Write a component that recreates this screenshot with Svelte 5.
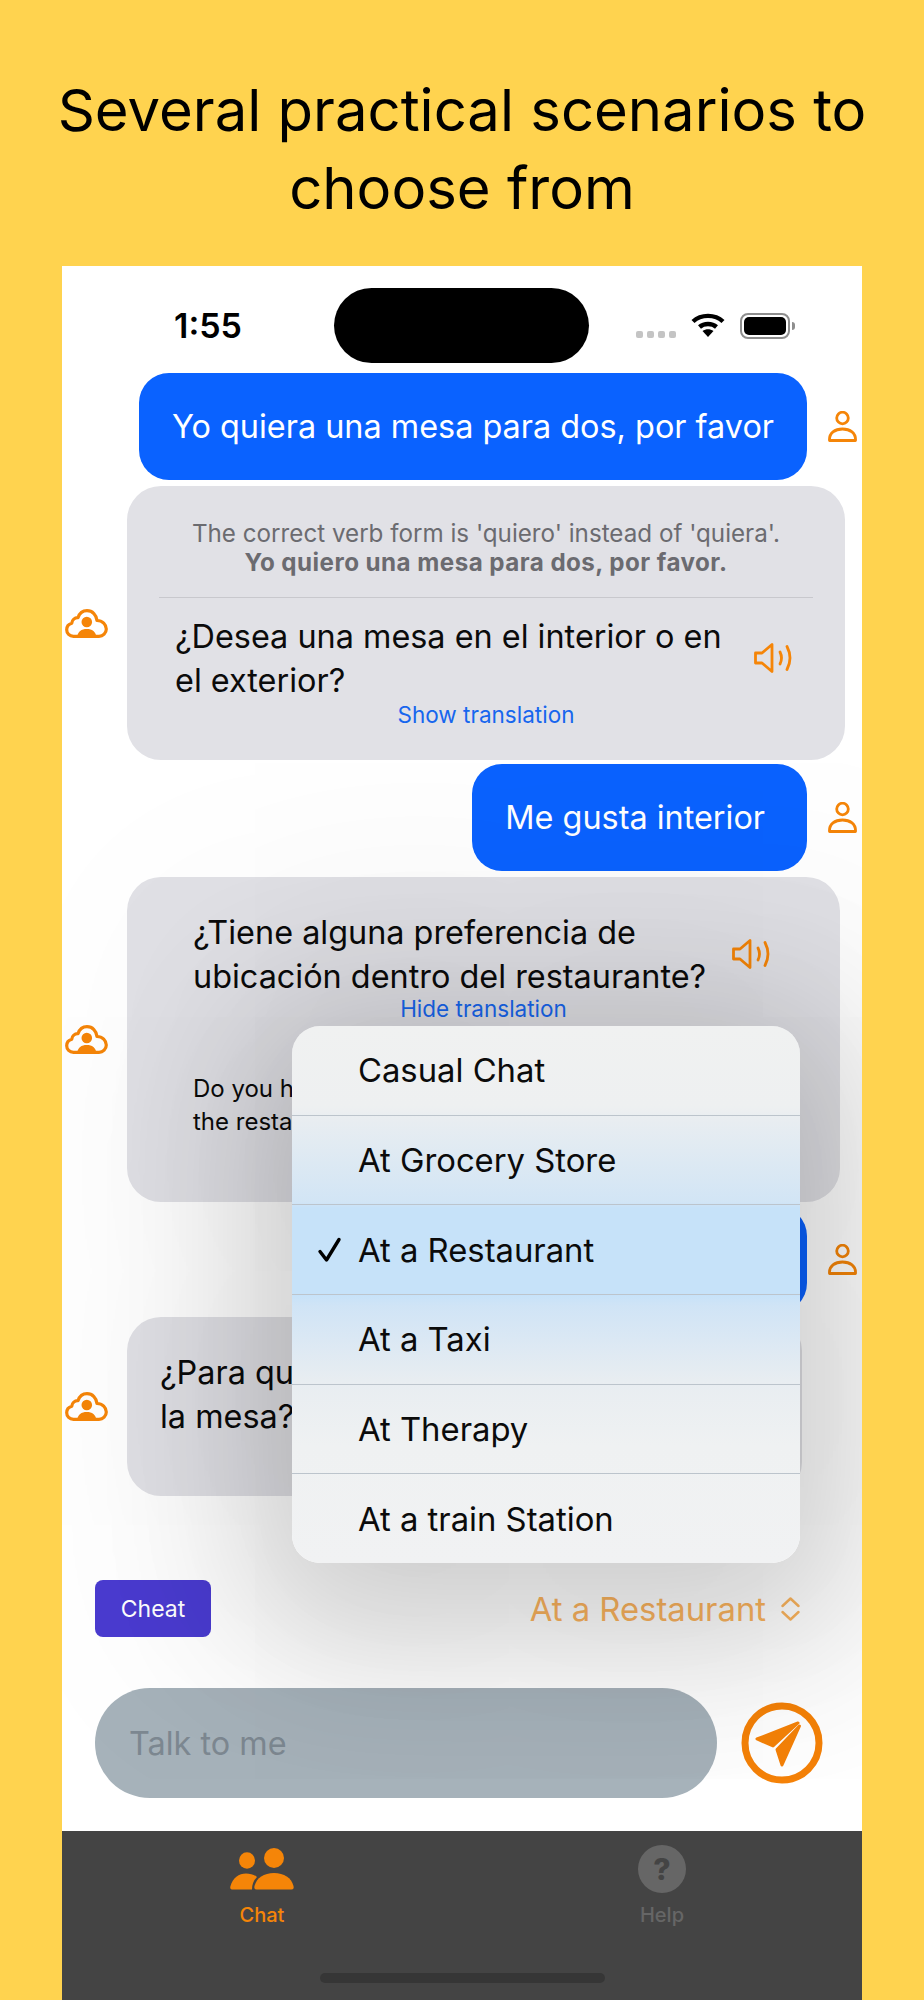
<script>
  // scenarios offered by the picker
  const scenarios = [
    { label: 'Casual Chat' },
    { label: 'At Grocery Store' },
    { label: 'At a Restaurant', selected: true },
    { label: 'At a Taxi' },
    { label: 'At Therapy' },
    { label: 'At a train Station' },
  ];
</script>

{#snippet userIcon()}
  <svg class="avatar-user" viewBox="0 0 29 31" width="29" height="31">
    <circle cx="14.5" cy="7" r="5.8" />
    <path d="M1.5 29.5 C1 22 7 18 14.5 18 C22 18 28 22 27.5 29.5 Z" />
  </svg>
{/snippet}

{#snippet botIcon()}
  <svg class="avatar-bot" viewBox="0 0 43 29" width="43" height="29">
    <path class="cloud" d="M8.5 27.3 C4.5 27.3 1.7 24.3 1.7 20.7 C1.7 17.5 3.8 15 6.8 14.2 C7 10.8 9.8 8.5 13 8.7 C14.5 4.3 18 1.7 22 1.7 C27.5 1.7 31.5 6 32 11.5 C37.5 11.5 41.3 15.5 41.3 20 C41.3 24 38 27.3 34 27.3 Z" />
    <circle class="fill" cx="21.8" cy="13" r="5.3" />
    <path class="fill" d="M12 28.5 C12.5 22.5 16.5 20 21.8 20 C27 20 31 22.5 31.5 28.5 Z" />
  </svg>
{/snippet}

{#snippet speaker()}
  <svg class="speaker" viewBox="0 0 38 30" width="38" height="30">
    <path d="M1.5 10 H8 L18 1.5 V28.5 L8 20 H1.5 Z" />
    <path d="M26 9 Q29 15 26 21" />
    <path d="M33 3.5 Q39 15 33 26.5" />
  </svg>
{/snippet}

<div class="page">
  <h1 class="headline">Several practical scenarios to<br />choose from</h1>

  <div class="phone">
    <div class="status">
      <span class="time">1:55</span>
      <div class="island"></div>
      <div class="signal">
        <i></i><i></i><i></i><i></i>
      </div>
      <svg class="wifi" viewBox="0 0 34 24" width="34" height="24">
        <path class="arc" d="M2 8.5 C10 1 24 1 32 8.5" />
        <path class="arc" d="M8.5 14 C13 10 21 10 25.5 14" />
        <path class="wedge" d="M11.5 18 C15 15.6 19 15.6 22.5 18 L17 24 Z" />
      </svg>
      <div class="battery"><div class="charge"></div></div>
      <div class="nub"></div>
    </div>

    <div class="thread">
      <div class="row user">
        <div class="bubble blue">Yo quiera una mesa para dos, por favor</div>
        {@render userIcon()}
      </div>

      <div class="row bot gap-wide">
        {@render botIcon()}
        <div class="bubble grey first">
          <p class="correction">
            The correct verb form is 'quiero' instead of 'quiera'.<br />
            <b>Yo quiero una mesa para dos, por favor.</b>
          </p>
          <div class="rule"></div>
          <div class="say">
            <p class="question">¿Desea una mesa en el interior o en el exterior?</p>
            {@render speaker()}
          </div>
          <div class="link">Show translation</div>
        </div>
      </div>

      <div class="row user">
        <div class="bubble blue short">Me gusta interior</div>
        {@render userIcon()}
      </div>

      <div class="row bot gap-wide">
        {@render botIcon()}
        <div class="bubble grey second">
          <div class="say">
            <p class="question">¿Tiene alguna preferencia de ubicación dentro del restaurante?</p>
            {@render speaker()}
          </div>
          <div class="link">Hide translation</div>
          <p class="translation">Do you have any preference for location<br />the restaurant?</p>
        </div>
      </div>

      <div class="row user">
        <div class="bubble blue">Adentro, cerca de la ventana</div>
        {@render userIcon()}
      </div>

      <div class="row bot">
        {@render botIcon()}
        <div class="bubble grey third">
          <p class="question">¿Para qué hora desea reservar<br />la mesa?</p>
        </div>
      </div>
    </div>

    <div class="controls">
      <button class="cheat">Cheat</button>
      <div class="picker">
        <span>At a Restaurant</span>
        <svg viewBox="0 0 21 24" width="21" height="24">
          <path d="M2.5 9 L10.5 1.5 L18.5 9" />
          <path d="M2.5 15 L10.5 22.5 L18.5 15" />
        </svg>
      </div>
    </div>

    <div class="composer">
      <input class="field" placeholder="Talk to me" />
      <svg class="send" viewBox="0 0 82 82" width="82" height="82">
        <circle class="ring" cx="41" cy="41" r="37" />
        <path class="plane" d="M57 21 L16 37 L32 44 Z" />
        <path class="plane" d="M58.5 24 L36 47.5 L41 63 Z" />
      </svg>
    </div>

    <nav class="tabs">
      <div class="tab-row">
        <div class="tab active">
          <svg viewBox="0 0 64 42" width="64" height="42">
            <ellipse cx="17" cy="12.5" rx="8" ry="8.3" />
            <circle cx="44" cy="10" r="10" />
            <path d="M2 41.5 C0 41.5 0 39.5 0.5 38 C2.5 30 9 25.5 16 25.5 C20 25.5 24 26.5 27 29 C24 32 22 36 22 41.5 Z" />
            <path d="M26.5 41.5 C24.5 41.5 24 40 24.5 38 C26.5 30 34 25 44 25 C54 25 61.5 30 63.5 38 C64 40 63.5 41.5 61.5 41.5 Z" />
          </svg>
          <span>Chat</span>
        </div>
        <div class="tab">
          <div class="help-mark">?</div>
          <span>Help</span>
        </div>
      </div>
      <div class="home-bar"></div>
    </nav>

    <div class="menu">
      {#each scenarios as item}
        <div class="menu-item">
          {#if item.selected}
            <svg class="tick" viewBox="0 0 25 26" width="25" height="26">
              <path d="M3 14.5 L9.5 23 L22 2.5" />
            </svg>
          {/if}
          {item.label}
        </div>
      {/each}
    </div>
  </div>
</div>

<style>
  :global(body) {
    margin: 0;
    background: #ffd34f;
  }

  .page {
    width: 924px;
    height: 2000px;
    overflow: hidden;
    background: #ffd34f;
    font-family: Inter, "Liberation Sans", sans-serif;
  }

  .headline {
    margin: 0;
    padding-top: 71px;
    height: 266px;
    box-sizing: border-box;
    font-size: 58px;
    font-weight: 400;
    line-height: 78px;
    text-align: center;
    color: #000;
  }

  .phone {
    position: relative;
    width: 800px;
    height: 1734px;
    margin-left: 62px;
    overflow: hidden;
    background: #fff;
    display: flex;
    flex-direction: column;
  }

  /* status bar */
  .status {
    height: 107px;
    box-sizing: border-box;
    padding: 22px 0 10px 112px;
    display: flex;
    align-items: center;
    flex-shrink: 0;
  }

  .time {
    width: 160px;
    font-size: 34px;
    font-weight: 600;
    color: #000;
  }

  .island {
    width: 255px;
    height: 75px;
    border-radius: 38px;
    background: #000;
  }

  .signal {
    display: flex;
    gap: 4px;
    margin-left: 47px;
    margin-top: 18px;
  }

  .signal i {
    width: 7px;
    height: 7px;
    border-radius: 2px;
    background: #c4c4c4;
  }

  .wifi {
    margin-left: 15px;
    margin-top: -2px;
  }

  .wifi .arc {
    fill: none;
    stroke: #000;
    stroke-width: 4.4;
  }

  .wifi .wedge {
    fill: #000;
  }

  .battery {
    margin-left: 15px;
    width: 50px;
    height: 26px;
    box-sizing: border-box;
    border: 2.5px solid #8e8e8e;
    border-radius: 8px;
    padding: 2px;
  }

  .charge {
    height: 100%;
    background: #000;
    border-radius: 5px;
  }

  .nub {
    width: 3px;
    height: 8px;
    margin-left: 2px;
    border-radius: 0 3px 3px 0;
    background: #8e8e8e;
  }

  /* conversation */
  .thread {
    display: flex;
    flex-direction: column;
    gap: 4px;
    flex-shrink: 0;
  }

  .row {
    display: flex;
    align-items: center;
  }

  .row.gap-wide {
    margin-top: 2px;
  }

  .row.user {
    justify-content: flex-end;
    gap: 21px;
    padding-right: 5px;
  }

  .row.bot {
    gap: 19px;
    padding-left: 3px;
  }

  .bubble {
    box-sizing: border-box;
  }

  .blue {
    height: 107px;
    padding: 0 33px;
    border-radius: 30px;
    background: #0a62ff;
    color: #fff;
    font-size: 32.4px;
    white-space: nowrap;
    display: flex;
    align-items: center;
  }

  .blue.short {
    padding-right: 42px;
  }

  .grey {
    border-radius: 34px;
    background: #e1e1e6;
    color: #0b0b0b;
  }

  .first {
    width: 718px;
    height: 274px;
    padding-top: 33px;
  }

  .second {
    width: 713px;
    height: 325px;
    padding-top: 34px;
    padding-left: 66px;
  }

  .third {
    width: 675px;
    height: 179px;
    padding: 34px 0 0 33px;
  }

  .correction {
    margin: 0;
    font-size: 24.2px;
    line-height: 29px;
    text-align: center;
    color: #6b6b70;
  }

  .correction b {
    letter-spacing: 0.45px;
  }

  .rule {
    height: 1px;
    margin: 20px 32px 17px;
    background: #c8c8cd;
  }

  .say {
    display: flex;
    align-items: center;
  }

  .first .say {
    padding-left: 48px;
  }

  .first .question {
    width: 579px;
    padding-right: 10px;
    box-sizing: border-box;
  }

  .second .question {
    width: 539px;
  }

  .question {
    margin: 0;
    font-size: 32.4px;
    line-height: 44px;
  }

  .speaker {
    margin-bottom: 3px;
    flex-shrink: 0;
    fill: none;
    stroke: #f58508;
    stroke-width: 2.8;
    stroke-linecap: round;
    stroke-linejoin: round;
  }

  .link {
    font-size: 22.5px;
    line-height: 24px;
    text-align: center;
    color: #1766ee;
  }

  .second .link {
    margin: -2px 0 0 -66px;
  }

  .translation {
    margin: 51px 0 0;
    font-size: 24px;
    line-height: 33px;
    white-space: nowrap;
  }

  .avatar-user {
    flex-shrink: 0;
    fill: none;
    stroke: #f58508;
    stroke-width: 2.8;
    stroke-linejoin: round;
  }

  .avatar-bot {
    flex-shrink: 0;
  }

  .avatar-bot .cloud {
    fill: none;
    stroke: #f58508;
    stroke-width: 3.2;
    stroke-linejoin: round;
  }

  .avatar-bot .fill {
    fill: #f58508;
  }

  /* cheat button and scenario picker */
  .controls {
    margin-top: 84px;
    padding: 0 61px 0 33px;
    display: flex;
    align-items: center;
    justify-content: space-between;
    flex-shrink: 0;
  }

  .cheat {
    width: 116px;
    height: 57px;
    border: 0;
    border-radius: 8px;
    background: #4a3bd0;
    color: #fff;
    font-family: inherit;
    font-size: 23px;
  }

  .picker {
    display: flex;
    align-items: center;
    gap: 14px;
    font-size: 32.8px;
    color: #fbb45e;
  }

  .picker svg {
    fill: none;
    stroke: #fbb45e;
    stroke-width: 2.4;
    stroke-linecap: round;
    stroke-linejoin: round;
  }

  /* message input */
  .composer {
    margin-top: 51px;
    padding-left: 33px;
    display: flex;
    align-items: center;
    gap: 24px;
    flex-shrink: 0;
  }

  .field {
    width: 622px;
    height: 110px;
    box-sizing: border-box;
    padding: 0 34px;
    border: 0;
    border-radius: 55px;
    background: #a6b2ba;
    font-family: inherit;
    font-size: 32.4px;
    outline: none;
  }

  .field::placeholder {
    color: #7d8891;
    opacity: 1;
  }

  .ring {
    fill: none;
    stroke: #f58208;
    stroke-width: 7;
  }

  .plane {
    fill: #f58208;
    stroke: #f58208;
    stroke-width: 3;
    stroke-linejoin: round;
  }

  /* tab bar */
  .tabs {
    position: relative;
    z-index: 2;
    margin-top: 33px;
    height: 169px;
    flex-shrink: 0;
    background: #444;
    display: flex;
    flex-direction: column;
  }

  .tab-row {
    display: flex;
    padding-top: 14px;
  }

  .tab {
    flex: 1;
    display: flex;
    flex-direction: column;
    align-items: center;
    font-size: 20px;
    font-weight: 500;
    color: #666;
  }

  .tab.active {
    color: #f58508;
    fill: #f58508;
  }

  .tab svg {
    margin-top: 3px;
    flex-shrink: 0;
  }

  .tab span {
    margin-top: 10px;
  }

  .tab.active span {
    margin-top: 13px;
  }

  .help-mark {
    width: 48px;
    height: 48px;
    border-radius: 50%;
    background: #666;
    color: #444;
    font-size: 30px;
    font-weight: 800;
    line-height: 48px;
    text-align: center;
    flex-shrink: 0;
  }

  .home-bar {
    width: 285px;
    height: 10px;
    margin: auto auto 17px;
    border-radius: 5px;
    background: #363636;
  }

  /* scenario menu, floats above the conversation */
  .menu {
    position: absolute;
    left: 230px;
    top: 760px;
    width: 508px;
    height: 537px;
    border-radius: 28px;
    background: linear-gradient(
      180deg,
      #f0f1f1 0,
      #eef0f1 80px,
      #e8edf1 95px,
      #d2e5f5 176px,
      #c6e2f9 182px,
      #c6e2f9 268px,
      #d0e4f6 280px,
      #e8edf1 355px,
      #eff1f2 420px,
      #f1f2f3 100%
    );
    box-shadow:
      0 30px 150px 40px rgba(0, 0, 0, 0.17),
      0 0 300px 110px rgba(0, 0, 0, 0.06);
    display: flex;
    flex-direction: column;
  }

  .menu-item {
    position: relative;
    flex: 1;
    box-sizing: border-box;
    padding-left: 66px;
    display: flex;
    align-items: center;
    font-size: 32.8px;
    color: #0b0b0b;
    border-top: 1.5px solid #bcc4cc;
  }

  .menu-item:first-child {
    border-top: 0;
  }

  .tick {
    position: absolute;
    left: 25px;
    fill: none;
    stroke: #000;
    stroke-width: 3.4;
    stroke-linecap: round;
    stroke-linejoin: round;
  }
</style>
